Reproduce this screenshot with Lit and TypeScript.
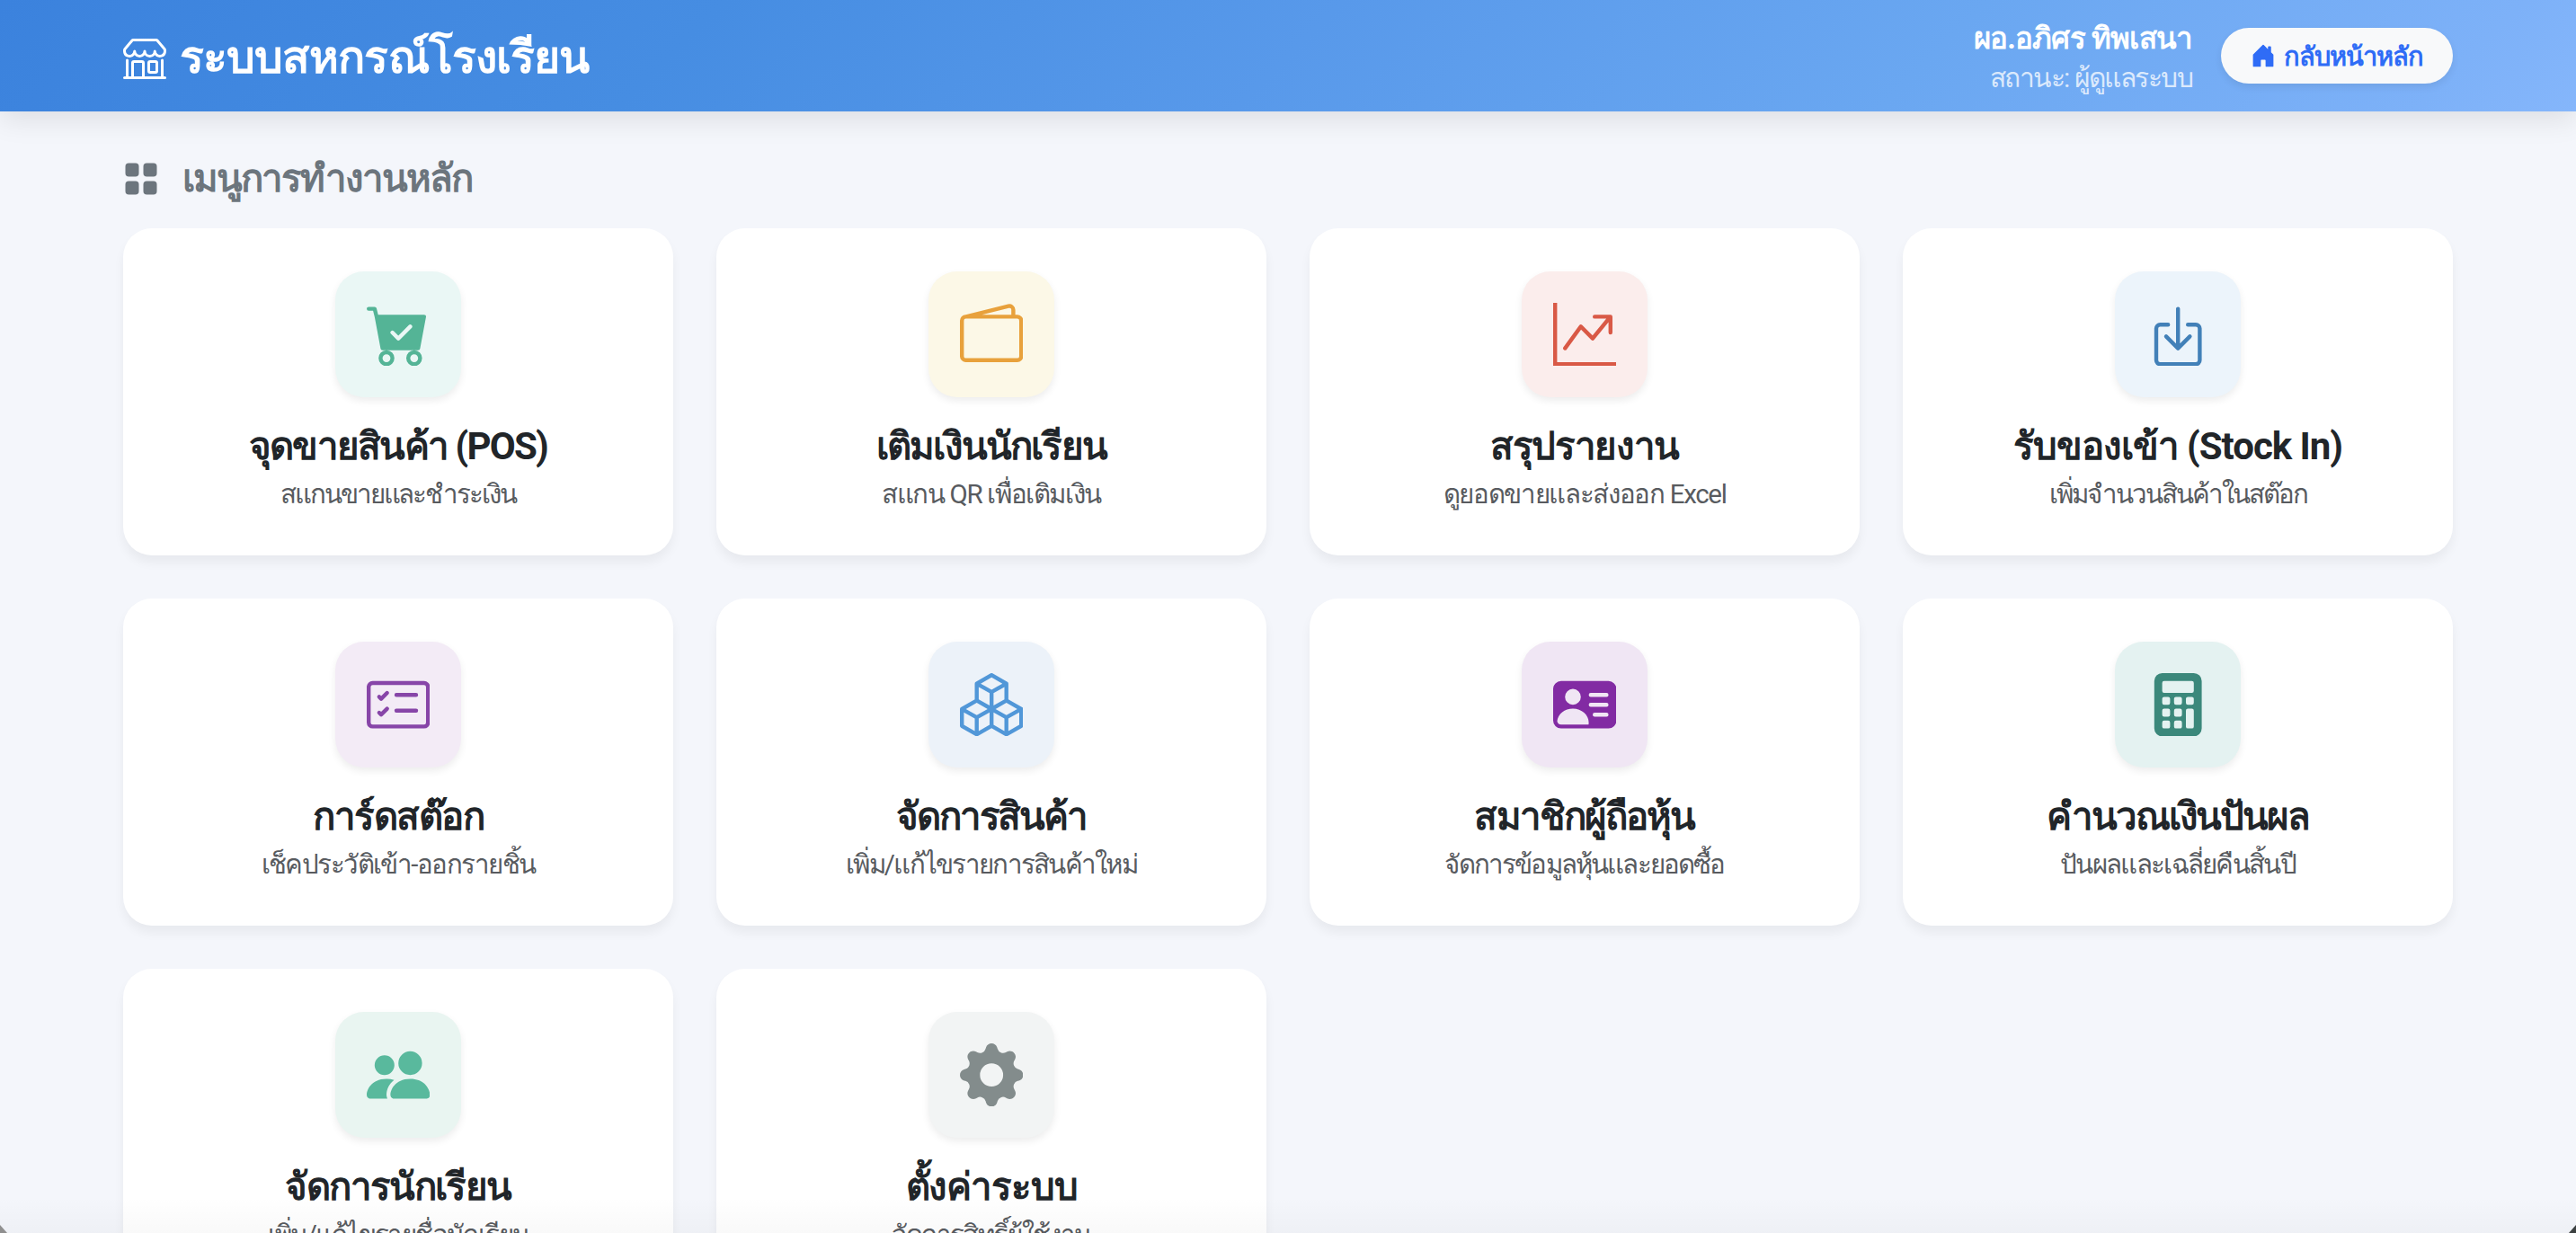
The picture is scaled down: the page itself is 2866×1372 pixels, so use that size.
import { LitElement, html, css, svg } from "lit";
import { customElement, property } from "lit/decorators.js";

const ICONS: Record<string, string[]> = {
  shop: ["M2.97 1.35A1 1 0 0 1 3.73 1h8.54a1 1 0 0 1 .76.35l2.609 3.044A1.5 1.5 0 0 1 16 5.37v.255a2.375 2.375 0 0 1-4.25 1.458A2.37 2.37 0 0 1 9.875 8 2.37 2.37 0 0 1 8 7.083 2.37 2.37 0 0 1 6.125 8a2.37 2.37 0 0 1-1.875-.917A2.375 2.375 0 0 1 0 5.625V5.37a1.5 1.5 0 0 1 .361-.976zm1.78 4.275a1.375 1.375 0 0 0 2.75 0 .5.5 0 0 1 1 0 1.375 1.375 0 0 0 2.75 0 .5.5 0 0 1 1 0 1.375 1.375 0 1 0 2.75 0V5.37a.5.5 0 0 0-.12-.325L12.27 2H3.73L1.12 5.045A.5.5 0 0 0 1 5.37v.255a1.375 1.375 0 0 0 2.75 0 .5.5 0 0 1 1 0M1.5 8.5A.5.5 0 0 1 2 9v6h1v-5a1 1 0 0 1 1-1h3a1 1 0 0 1 1 1v5h6V9a.5.5 0 0 1 1 0v6h.5a.5.5 0 0 1 0 1H.5a.5.5 0 0 1 0-1H1V9a.5.5 0 0 1 .5-.5M4 15h3v-5H4zm5-5a1 1 0 0 1 1-1h2a1 1 0 0 1 1 1v3a1 1 0 0 1-1 1h-2a1 1 0 0 1-1-1zm3 0h-2v3h2z"],
  home: ["M6.5 14.5v-3.505c0-.245.25-.495.5-.495h2c.25 0 .5.25.5.5v3.5a.5.5 0 0 0 .5.5h4a.5.5 0 0 0 .5-.5v-7a.5.5 0 0 0-.146-.354L13 5.793V2.5a.5.5 0 0 0-.5-.5h-1a.5.5 0 0 0-.5.5v1.293L8.354 1.146a.5.5 0 0 0-.708 0l-6 6A.5.5 0 0 0 1.5 7.5v7a.5.5 0 0 0 .5.5h4a.5.5 0 0 0 .5-.5"],
  grid: ["M1 2.5A1.5 1.5 0 0 1 2.5 1h3A1.5 1.5 0 0 1 7 2.5v3A1.5 1.5 0 0 1 5.5 7h-3A1.5 1.5 0 0 1 1 5.5zm8 0A1.5 1.5 0 0 1 10.5 1h3A1.5 1.5 0 0 1 15 2.5v3A1.5 1.5 0 0 1 13.5 7h-3A1.5 1.5 0 0 1 9 5.5zm-8 8A1.5 1.5 0 0 1 2.5 9h3A1.5 1.5 0 0 1 7 10.5v3A1.5 1.5 0 0 1 5.5 15h-3A1.5 1.5 0 0 1 1 13.5zm8 0A1.5 1.5 0 0 1 10.5 9h3a1.5 1.5 0 0 1 1.5 1.5v3a1.5 1.5 0 0 1-1.5 1.5h-3A1.5 1.5 0 0 1 9 13.5z"],
  cart: ["M.5 1a.5.5 0 0 0 0 1h1.11l.401 1.607 1.498 7.985A.5.5 0 0 0 4 12h1a2 2 0 1 0 0 4 2 2 0 0 0 0-4h7a2 2 0 1 0 0 4 2 2 0 0 0 0-4h1a.5.5 0 0 0 .491-.408l1.5-8A.5.5 0 0 0 14.5 3H2.89l-.405-1.621A.5.5 0 0 0 2 1zM6 14a1 1 0 1 1-2 0 1 1 0 0 1 2 0m7 0a1 1 0 1 1-2 0 1 1 0 0 1 2 0m-1.646-7.646-3 3a.5.5 0 0 1-.708 0l-1.5-1.5a.5.5 0 1 1 .708-.708L8 8.293l2.646-2.647a.5.5 0 0 1 .708.708"],
  wallet: ["M12.136.326A1.5 1.5 0 0 1 14 1.78V3h.5A1.5 1.5 0 0 1 16 4.5v9a1.5 1.5 0 0 1-1.5 1.5h-13A1.5 1.5 0 0 1 0 13.5v-9a1.5 1.5 0 0 1 1.432-1.499zM5.562 3H13V1.78a.5.5 0 0 0-.621-.484zM1.5 4a.5.5 0 0 0-.5.5v9a.5.5 0 0 0 .5.5h13a.5.5 0 0 0 .5-.5v-9a.5.5 0 0 0-.5-.5z"],
  graph: ["M0 0h1v15h15v1H0zm10 3.5a.5.5 0 0 1 .5-.5h4a.5.5 0 0 1 .5.5v4a.5.5 0 0 1-1 0V4.9l-3.613 4.417a.5.5 0 0 1-.74.037L7.06 6.767l-3.656 5.027a.5.5 0 0 1-.808-.588l4-5.5a.5.5 0 0 1 .758-.06l2.609 2.61L13.445 4H10.5a.5.5 0 0 1-.5-.5"],
  boxIn: [
    "M3.5 6a.5.5 0 0 0-.5.5v8a.5.5 0 0 0 .5.5h9a.5.5 0 0 0 .5-.5v-8a.5.5 0 0 0-.5-.5h-2a.5.5 0 0 1 0-1h2A1.5 1.5 0 0 1 14 6.5v8a1.5 1.5 0 0 1-1.5 1.5h-9A1.5 1.5 0 0 1 2 14.5v-8A1.5 1.5 0 0 1 3.5 5h2a.5.5 0 0 1 0 1z",
    "M7.646 11.854a.5.5 0 0 0 .708 0l3-3a.5.5 0 0 0-.708-.708L8.5 10.293V1.5a.5.5 0 0 0-1 0v8.793L5.354 8.146a.5.5 0 1 0-.708.708z",
  ],
  checklist: [
    "M14.5 3a.5.5 0 0 1 .5.5v9a.5.5 0 0 1-.5.5h-13a.5.5 0 0 1-.5-.5v-9a.5.5 0 0 1 .5-.5zm-13-1A1.5 1.5 0 0 0 0 3.5v9A1.5 1.5 0 0 0 1.5 14h13a1.5 1.5 0 0 0 1.5-1.5v-9A1.5 1.5 0 0 0 14.5 2z",
    "M7 5.5a.5.5 0 0 1 .5-.5h5a.5.5 0 0 1 0 1h-5a.5.5 0 0 1-.5-.5m-1.496-.854a.5.5 0 0 1 0 .708l-1.5 1.5a.5.5 0 0 1-.708 0l-.5-.5a.5.5 0 1 1 .708-.708l.146.147 1.146-1.147a.5.5 0 0 1 .708 0M7 9.5a.5.5 0 0 1 .5-.5h5a.5.5 0 0 1 0 1h-5a.5.5 0 0 1-.5-.5m-1.496-.854a.5.5 0 0 1 0 .708l-1.5 1.5a.5.5 0 0 1-.708 0l-.5-.5a.5.5 0 0 1 .708-.708l.146.147 1.146-1.147a.5.5 0 0 1 .708 0",
  ],
  boxes: ["M7.752.066a.5.5 0 0 1 .496 0l3.75 2.143a.5.5 0 0 1 .252.434v3.995l3.498 2A.5.5 0 0 1 16 9.07v4.286a.5.5 0 0 1-.252.434l-3.75 2.143a.5.5 0 0 1-.496 0l-3.502-2-3.502 2.001a.5.5 0 0 1-.496 0l-3.75-2.143A.5.5 0 0 1 0 13.357V9.071a.5.5 0 0 1 .252-.434L3.75 6.638V2.643a.5.5 0 0 1 .252-.434zM4.25 7.504 1.508 9.071l2.742 1.567 2.742-1.567zM7.5 9.933l-2.75 1.571v3.134l2.75-1.571zm1 3.134 2.75 1.571v-3.134L8.5 9.933zm.508-3.996 2.742 1.567 2.742-1.567-2.742-1.567zm2.242-2.433V3.504L8.5 5.076V8.21zM7.5 8.21V5.076L4.75 3.504v3.134zM5.258 2.643 8 4.21l2.742-1.567L8 1.076zM15 9.933l-2.75 1.571v3.134L15 13.067zM3.75 14.638v-3.134L1 9.933v3.134z"],
  vcard: ["M0 4a2 2 0 0 1 2-2h12a2 2 0 0 1 2 2v8a2 2 0 0 1-2 2H2a2 2 0 0 1-2-2zm9 1.5a.5.5 0 0 0 .5.5h4a.5.5 0 0 0 0-1h-4a.5.5 0 0 0-.5.5M9 8a.5.5 0 0 0 .5.5h4a.5.5 0 0 0 0-1h-4A.5.5 0 0 0 9 8m1 2.5a.5.5 0 0 0 .5.5h3a.5.5 0 0 0 0-1h-3a.5.5 0 0 0-.5.5m-1 2C9 10.567 7.21 9 5 9c-2.086 0-3.8 1.398-3.984 3.181A1 1 0 0 0 2 13h6.96q.04-.245.04-.5M7 6a2 2 0 1 0-4 0 2 2 0 0 0 4 0"],
  calculator: ["M2 2a2 2 0 0 1 2-2h8a2 2 0 0 1 2 2v12a2 2 0 0 1-2 2H4a2 2 0 0 1-2-2zm2 .5v2a.5.5 0 0 0 .5.5h7a.5.5 0 0 0 .5-.5v-2a.5.5 0 0 0-.5-.5h-7a.5.5 0 0 0-.5.5m0 4v1a.5.5 0 0 0 .5.5h1a.5.5 0 0 0 .5-.5v-1a.5.5 0 0 0-.5-.5h-1a.5.5 0 0 0-.5.5M4.5 9a.5.5 0 0 0-.5.5v1a.5.5 0 0 0 .5.5h1a.5.5 0 0 0 .5-.5v-1a.5.5 0 0 0-.5-.5zM4 12.5v1a.5.5 0 0 0 .5.5h1a.5.5 0 0 0 .5-.5v-1a.5.5 0 0 0-.5-.5h-1a.5.5 0 0 0-.5.5M7.5 6a.5.5 0 0 0-.5.5v1a.5.5 0 0 0 .5.5h1a.5.5 0 0 0 .5-.5v-1a.5.5 0 0 0-.5-.5zM7 9.5v1a.5.5 0 0 0 .5.5h1a.5.5 0 0 0 .5-.5v-1a.5.5 0 0 0-.5-.5h-1a.5.5 0 0 0-.5.5m.5 2.5a.5.5 0 0 0-.5.5v1a.5.5 0 0 0 .5.5h1a.5.5 0 0 0 .5-.5v-1a.5.5 0 0 0-.5-.5zM10 6.5v1a.5.5 0 0 0 .5.5h1a.5.5 0 0 0 .5-.5v-1a.5.5 0 0 0-.5-.5h-1a.5.5 0 0 0-.5.5m.5 2.5a.5.5 0 0 0-.5.5v4a.5.5 0 0 0 .5.5h1a.5.5 0 0 0 .5-.5v-4a.5.5 0 0 0-.5-.5z"],
  people: ["M7 14s-1 0-1-1 1-4 5-4 5 3 5 4-1 1-1 1zm4-6a3 3 0 1 0 0-6 3 3 0 0 0 0 6m-5.784 6A2.24 2.24 0 0 1 5 13c0-1.355.68-2.75 1.936-3.72A6.3 6.3 0 0 0 5 9c-4 0-5 3-5 4s1 1 1 1zM4.5 8a2.5 2.5 0 1 0 0-5 2.5 2.5 0 0 0 0 5"],
  gear: ["M9.405 1.05c-.413-1.4-2.397-1.4-2.81 0l-.1.34a1.464 1.464 0 0 1-2.105.872l-.31-.17c-1.283-.698-2.686.705-1.987 1.987l.169.311c.446.82.023 1.841-.872 2.105l-.34.1c-1.4.413-1.4 2.397 0 2.81l.34.1a1.464 1.464 0 0 1 .872 2.105l-.17.31c-.698 1.283.705 2.686 1.987 1.987l.311-.169a1.464 1.464 0 0 1 2.105.872l.1.34c.413 1.4 2.397 1.4 2.81 0l.1-.34a1.464 1.464 0 0 1 2.105-.872l.31.17c1.283.698 2.686-.705 1.987-1.987l-.169-.311a1.464 1.464 0 0 1 .872-2.105l.34-.1c1.4-.413 1.4-2.397 0-2.81l-.34-.1a1.464 1.464 0 0 1-.872-2.105l.17-.31c.698-1.283-.705-2.686-1.987-1.987l-.311.169a1.464 1.464 0 0 1-2.105-.872zM8 10.93a2.929 2.929 0 1 1 0-5.86 2.929 2.929 0 0 1 0 5.858z"],
};

@customElement("app-icon")
export class AppIcon extends LitElement {
  static styles = css`
    :host { display: block; width: 1em; height: 1em; flex: none; }
    .glyph { display: block; width: 100%; height: 100%; fill: currentColor; }
  `;
  @property() name = "";
  render() {
    return html`<svg class="glyph" viewBox="0 0 16 16" aria-hidden="true">
      ${ICONS[this.name].map((d) => svg`<path d=${d}></path>`)}
    </svg>`;
  }
}

/* A single line of text whose tracking is adjusted to span a given measure. */
@customElement("fit-text")
export class FitText extends LitElement {
  static styles = css`
    :host { display: block; width: max-content; white-space: nowrap; }
    .line { display: inline-block; }
  `;
  @property() text = "";
  @property({ type: Number }) measure = 0;

  private clusters(): number {
    return Array.from(this.text.replace(/[\u0e31\u0e34-\u0e3a\u0e47-\u0e4e]/g, "")).length;
  }

  firstUpdated() {
    const line = this.renderRoot.querySelector(".line") as HTMLElement;
    const natural = line.getBoundingClientRect().width;
    if (!natural || !this.measure) return;
    line.style.letterSpacing = `${(this.measure - natural) / this.clusters()}px`;
  }

  render() {
    return html`<span class="line">${this.text}</span>`;
  }
}

interface MenuItem {
  icon: string;
  tone: string;
  title: string;
  titleWidth: number;
  note: string;
  noteWidth: number;
}

const MENU: MenuItem[] = [
  { icon: "cart", tone: "green", title: "จุดขายสินค้า (POS)", titleWidth: 332, note: "สแกนขายและชำระเงิน", noteWidth: 260 },
  { icon: "wallet", tone: "amber", title: "เติมเงินนักเรียน", titleWidth: 256, note: "สแกน QR เพื่อเติมเงิน", noteWidth: 244 },
  { icon: "graph", tone: "red", title: "สรุปรายงาน", titleWidth: 210, note: "ดูยอดขายและส่งออก Excel", noteWidth: 315 },
  { icon: "boxIn", tone: "blue", title: "รับของเข้า (Stock In)", titleWidth: 366, note: "เพิ่มจำนวนสินค้าในสต๊อก", noteWidth: 285 },
  { icon: "checklist", tone: "violet", title: "การ์ดสต๊อก", titleWidth: 190, note: "เช็คประวัติเข้า-ออกรายชิ้น", noteWidth: 305 },
  { icon: "boxes", tone: "sky", title: "จัดการสินค้า", titleWidth: 212, note: "เพิ่ม/แก้ไขรายการสินค้าใหม่", noteWidth: 324 },
  { icon: "vcard", tone: "purple", title: "สมาชิกผู้ถือหุ้น", titleWidth: 245, note: "จัดการข้อมูลหุ้นและยอดซื้อ", noteWidth: 311 },
  { icon: "calculator", tone: "teal", title: "คำนวณเงินปันผล", titleWidth: 290, note: "ปันผลและเฉลี่ยคืนสิ้นปี", noteWidth: 262 },
  { icon: "people", tone: "mint", title: "จัดการนักเรียน", titleWidth: 251, note: "เพิ่ม/แก้ไขรายชื่อนักเรียน", noteWidth: 291 },
  { icon: "gear", tone: "grey", title: "ตั้งค่าระบบ", titleWidth: 191, note: "จัดการสิทธิ์ผู้ใช้งาน", noteWidth: 221 },
];

@customElement("app-root")
export class AppRoot extends LitElement {
  static styles = css`
    :host {
      display: block;
      position: relative;
      height: 1372px;
      overflow: hidden;
      background: #f4f6fb;
      color: #212529;
      font-family: Roboto, "Noto Sans", "Liberation Sans", sans-serif;
    }
    .bar {
      box-sizing: border-box;
      height: 124px;
      padding: 0 137px;
      display: flex;
      align-items: center;
      justify-content: space-between;
      color: #fff;
      background: linear-gradient(135deg, #3b82dd 0%, #468de2 27%, #5899ea 50%, #6aa7f1 74%, #7db1f8 94%, #85b6fb 100%);
      box-shadow: 0 8px 30px rgba(0, 0, 0, 0.1);
    }
    .brand { display: flex; align-items: center; gap: 15px; padding-top: 3px; font-size: 48px; font-weight: 700; line-height: 58px; }
    .brand-name { font-size: 50px; }
    .account { display: flex; align-items: center; gap: 32px; }
    .who { display: flex; flex-direction: column; align-items: flex-end; padding-top: 3px; }
    .name { font-size: 33px; font-weight: 700; line-height: 46px; }
    .status { font-size: 30px; line-height: 42px; color: rgba(255, 255, 255, 0.75); }
    .back {
      box-sizing: border-box;
      width: 258px;
      height: 62px;
      padding: 0;
      display: flex;
      align-items: center;
      justify-content: center;
      gap: 9px;
      border: 0;
      border-radius: 31px;
      background: #f8f9fa;
      color: #2f6cf6;
      font: inherit;
      font-size: 28px;
      font-weight: 700;
      box-shadow: 0 4px 8px rgba(0, 0, 0, 0.075);
    }
    .back-label { padding-top: 1px; font-size: 29px; line-height: 32px; }
    .page { padding: 48px 137px 0; }
    .heading {
      display: flex;
      align-items: center;
      gap: 26px;
      height: 54px;
      margin: 0 0 28px;
      color: #6c757d;
      font-size: 40px;
      font-weight: 700;
      line-height: 48px;
    }
    .heading-text { font-size: 42px; }
    .menu { display: grid; grid-template-columns: repeat(4, 1fr); gap: 48px; grid-auto-rows: 364px; }
    .card {
      display: flex;
      flex-direction: column;
      align-items: center;
      box-sizing: border-box;
      padding-top: 48px;
      border-radius: 32px;
      background: #fff;
      box-shadow: 0 8px 12px rgba(0, 0, 0, 0.05);
    }
    .tile {
      display: flex;
      align-items: center;
      justify-content: center;
      width: 140px;
      height: 140px;
      border-radius: 32px;
      font-size: 70.4px;
      box-shadow: 0 4px 8px rgba(0, 0, 0, 0.075);
    }
    .title { margin-top: 31px; font-size: 42px; font-weight: 700; line-height: 48px; }
    .note { margin-top: 8px; font-size: 29.5px; line-height: 42px; color: #585b5f; }
    .green { background: #eaf7f5; color: #54b496; }
    .amber { background: #fcf8e7; color: #e8a13c; }
    .red { background: #fbedec; color: #d95946; }
    .blue { background: #ecf4fb; color: #4280b8; }
    .violet { background: #f3ebf6; color: #8745a8; }
    .sky { background: #ecf2f9; color: #5197d8; }
    .purple { background: #f0e6f4; color: #822ba3; }
    .teal { background: #e4f2f1; color: #3b887b; }
    .mint { background: #e9f5f1; color: #59b99d; }
    .grey { background: #f2f4f4; color: #838c8c; }
    .fade {
      position: absolute;
      inset: auto 0 0 0;
      height: 40px;
      background: linear-gradient(rgba(0, 0, 0, 0), rgba(0, 0, 0, 0.025));
    }
    .corner { position: absolute; left: 0; bottom: 0; width: 8px; height: 9px; background: #8f8f8f; clip-path: polygon(0 0, 100% 100%, 0 100%); }
    .corner-right { left: auto; right: 0; background: #3c4141; clip-path: polygon(100% 0, 100% 100%, 0 100%); }
  `;

  render() {
    return html`
      <header class="bar">
        <div class="brand">
          <app-icon name="shop"></app-icon>
          <fit-text class="brand-name" text="ระบบสหกรณ์โรงเรียน" .measure=${455}></fit-text>
        </div>
        <div class="account">
          <div class="who">
            <fit-text class="name" text="ผอ.อภิศร ทิพเสนา" .measure=${243}></fit-text>
            <fit-text class="status" text="สถานะ: ผู้ดูแลระบบ" .measure=${225}></fit-text>
          </div>
          <button class="back">
            <app-icon name="home"></app-icon>
            <fit-text class="back-label" text="กลับหน้าหลัก" .measure=${154}></fit-text>
          </button>
        </div>
      </header>
      <main class="page">
        <h2 class="heading">
          <app-icon name="grid"></app-icon>
          <fit-text class="heading-text" text="เมนูการทำงานหลัก" .measure=${320}></fit-text>
        </h2>
        <section class="menu">
          ${MENU.map(
            (item) => html`
              <article class="card">
                <div class="tile ${item.tone}"><app-icon name=${item.icon}></app-icon></div>
                <fit-text class="title" .text=${item.title} .measure=${item.titleWidth}></fit-text>
                <fit-text class="note" .text=${item.note} .measure=${item.noteWidth}></fit-text>
              </article>
            `
          )}
        </section>
      </main>
      <div class="fade"></div>
      <div class="corner"></div>
      <div class="corner corner-right"></div>
    `;
  }
}
